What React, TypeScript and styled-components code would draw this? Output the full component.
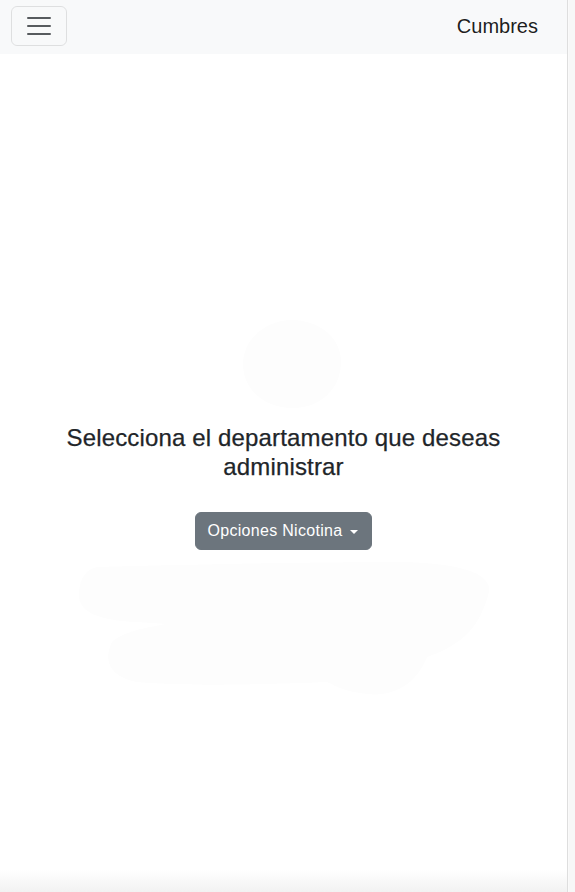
import React from "react";
import styled, { createGlobalStyle } from "styled-components";

const Global = createGlobalStyle`
  html, body { margin: 0; padding: 0; background: #fff; }
  body { font-family: "Liberation Sans", Arial, Helvetica, sans-serif; color: #212529; }
  * { box-sizing: border-box; }
`;

const Frame = styled.div`
  display: flex;
  height: 100vh;
  width: 100%;
`;

const Page = styled.div`
  flex: 1;
  display: flex;
  flex-direction: column;
  min-width: 0;
`;

const ScrollTrack = styled.div`
  width: 8px;
  flex-shrink: 0;
  background: #f7f7f7;
  border-left: 1px solid #dedede;
  box-shadow: inset 1px 0 0 #fafafa;
`;

const Navbar = styled.nav`
  height: 54px;
  background: #f8f9fa;
  display: flex;
  align-items: flex-start;
  justify-content: space-between;
  padding: 6px 29px 0 11px;
`;

const Toggler = styled.button`
  width: 56px;
  height: 40px;
  padding: 4px 12px;
  border: 1px solid rgba(0, 0, 0, 0.1);
  border-radius: 6px;
  background: transparent;
  display: flex;
  align-items: center;
  justify-content: center;
`;

const Brand = styled.a`
  font-size: 20px;
  line-height: 30px;
  color: rgba(0, 0, 0, 0.9);
  text-decoration: none;
  margin-top: 5px;
`;

const Main = styled.main`
  flex: 1;
  display: flex;
  flex-direction: column;
  align-items: center;
  padding-top: 264px;
`;

const Picture = styled.svg<{ $mt?: number }>`
  display: block;
  margin-top: ${(p) => p.$mt ?? 0}px;
`;

const Heading = styled.h4`
  margin: 14px 0 0;
  width: 480px;
  font-size: 24px;
  font-weight: 500;
  line-height: 28.8px;
  letter-spacing: 0.15px;
  text-align: center;
  color: #212529;
  -webkit-text-stroke: 0.25px #212529;
`;

const DropButton = styled.button`
  margin-top: 30px;
  height: 38px;
  padding: 6px 13px 6px 12px;
  border: 1px solid #6c757d;
  border-radius: 6px;
  background: #6c757d;
  color: #fff;
  font-family: inherit;
  font-size: 16px;
  line-height: 24px;
  letter-spacing: 0.3px;
  display: inline-flex;
  align-items: center;
  &::after {
    content: "";
    display: inline-block;
    margin-left: 8px;
    margin-top: 2px;
    border-top: 4.8px solid #fff;
    border-left: 4.8px solid transparent;
    border-right: 4.8px solid transparent;
  }
`;

const BottomFade = styled.div`
  height: 22px;
  flex-shrink: 0;
  background: linear-gradient(to bottom, #ffffff, #f2f2f2);
`;

export default function App() {
  return (
    <>
      <Global />
      <Frame>
        <Page>
          <Navbar>
            <Toggler aria-label="Toggle navigation">
              <svg width="30" height="30" viewBox="0 0 30 30">
                <path
                  d="M4 7h22M4 15h22M4 23h22"
                  stroke="rgba(33,37,41,0.75)"
                  strokeWidth="2"
                  strokeLinecap="round"
                />
              </svg>
            </Toggler>
            <Brand href="#">Cumbres</Brand>
          </Navbar>
          <Main>
            <Picture width="126" height="92" viewBox="0 0 126 92">
              <path
                transform="translate(16 0)"
                d="M55 2 C80 2 104 18 104 44 C104 70 84 90 56 90 C28 90 6 72 6 46 C6 20 30 2 55 2 Z"
                fill="#fdfdfd"
              />
            </Picture>
            <Heading>Selecciona el departamento que deseas administrar</Heading>
            <DropButton type="button">Opciones Nicotina</DropButton>
            <Picture $mt={12} width="426" height="136" viewBox="0 0 426 136">
              <path
                transform="translate(6 0)"
                d="M20 5 C120 2 250 0 330 0 C380 2 415 10 412 30 C405 55 395 80 350 95 C340 120 320 135 290 132 C270 130 260 125 250 120 C200 122 120 125 60 120 C35 115 25 100 35 80 C45 70 70 65 90 62 L60 60 C20 58 0 50 2 30 C3 15 10 7 20 5 Z"
                fill="#fdfdfd"
              />
            </Picture>
          </Main>
          <BottomFade />
        </Page>
        <ScrollTrack />
      </Frame>
    </>
  );
}
